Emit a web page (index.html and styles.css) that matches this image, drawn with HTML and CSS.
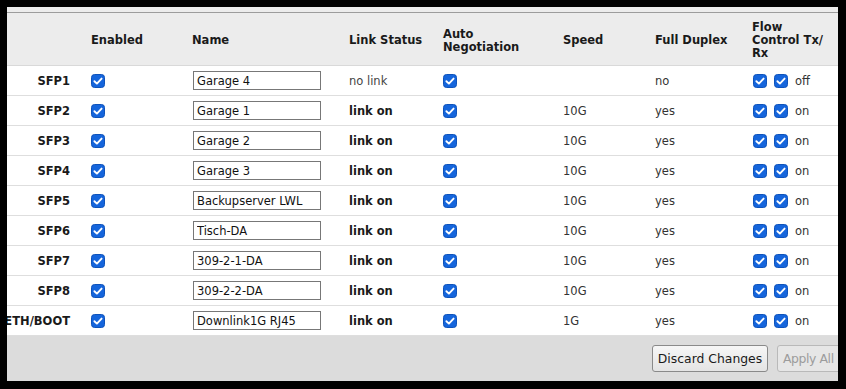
FILE: index.html
```html
<!DOCTYPE html>
<html lang="en">
<head>
<meta charset="utf-8">
<title>Ports</title>
<link rel="stylesheet" href="styles.css">
</head>
<body>
<svg class="defs" width="0" height="0" aria-hidden="true">
  <symbol id="chk" viewBox="0 0 14 14">
    <rect x="0.5" y="0.5" width="13" height="13" rx="3" fill="#1565dc" stroke="#0e53bb"/>
    <path d="M3.4 7.2 5.9 9.6 10.6 4.6" fill="none" stroke="#fff" stroke-width="1.9" stroke-linecap="round" stroke-linejoin="round"/>
  </symbol>
</svg>
<div class="frame">
  <div class="topbar"></div>
  <div class="scroller">
    <table class="ports">
      <colgroup>
        <col class="c-port"><col class="c-en"><col class="c-name"><col class="c-link"><col class="c-auto"><col class="c-speed"><col class="c-dup"><col class="c-flow">
      </colgroup>
      <thead>
        <tr>
          <th></th>
          <th>Enabled</th>
          <th>Name</th>
          <th>Link Status</th>
          <th>Auto<br>Negotiation</th>
          <th>Speed</th>
          <th>Full Duplex</th>
          <th>Flow<br>Control Tx/<br>Rx</th>
        </tr>
      </thead>
      <tbody>
        <tr>
          <td class="port">SFP1</td>
          <td><svg class="cb"><use href="#chk"/></svg></td>
          <td><input class="name" type="text" value="Garage 4"></td>
          <td class="muted">no link</td>
          <td><svg class="cb"><use href="#chk"/></svg></td>
          <td></td>
          <td>no</td>
          <td><span class="fc"><svg class="cb"><use href="#chk"/></svg><svg class="cb"><use href="#chk"/></svg><span>off</span></span></td>
        </tr>
        <tr>
          <td class="port">SFP2</td>
          <td><svg class="cb"><use href="#chk"/></svg></td>
          <td><input class="name" type="text" value="Garage 1"></td>
          <td class="on">link on</td>
          <td><svg class="cb"><use href="#chk"/></svg></td>
          <td>10G</td>
          <td>yes</td>
          <td><span class="fc"><svg class="cb"><use href="#chk"/></svg><svg class="cb"><use href="#chk"/></svg><span>on</span></span></td>
        </tr>
        <tr>
          <td class="port">SFP3</td>
          <td><svg class="cb"><use href="#chk"/></svg></td>
          <td><input class="name" type="text" value="Garage 2"></td>
          <td class="on">link on</td>
          <td><svg class="cb"><use href="#chk"/></svg></td>
          <td>10G</td>
          <td>yes</td>
          <td><span class="fc"><svg class="cb"><use href="#chk"/></svg><svg class="cb"><use href="#chk"/></svg><span>on</span></span></td>
        </tr>
        <tr>
          <td class="port">SFP4</td>
          <td><svg class="cb"><use href="#chk"/></svg></td>
          <td><input class="name" type="text" value="Garage 3"></td>
          <td class="on">link on</td>
          <td><svg class="cb"><use href="#chk"/></svg></td>
          <td>10G</td>
          <td>yes</td>
          <td><span class="fc"><svg class="cb"><use href="#chk"/></svg><svg class="cb"><use href="#chk"/></svg><span>on</span></span></td>
        </tr>
        <tr>
          <td class="port">SFP5</td>
          <td><svg class="cb"><use href="#chk"/></svg></td>
          <td><input class="name" type="text" value="Backupserver LWL"></td>
          <td class="on">link on</td>
          <td><svg class="cb"><use href="#chk"/></svg></td>
          <td>10G</td>
          <td>yes</td>
          <td><span class="fc"><svg class="cb"><use href="#chk"/></svg><svg class="cb"><use href="#chk"/></svg><span>on</span></span></td>
        </tr>
        <tr>
          <td class="port">SFP6</td>
          <td><svg class="cb"><use href="#chk"/></svg></td>
          <td><input class="name" type="text" value="Tisch-DA"></td>
          <td class="on">link on</td>
          <td><svg class="cb"><use href="#chk"/></svg></td>
          <td>10G</td>
          <td>yes</td>
          <td><span class="fc"><svg class="cb"><use href="#chk"/></svg><svg class="cb"><use href="#chk"/></svg><span>on</span></span></td>
        </tr>
        <tr>
          <td class="port">SFP7</td>
          <td><svg class="cb"><use href="#chk"/></svg></td>
          <td><input class="name" type="text" value="309-2-1-DA"></td>
          <td class="on">link on</td>
          <td><svg class="cb"><use href="#chk"/></svg></td>
          <td>10G</td>
          <td>yes</td>
          <td><span class="fc"><svg class="cb"><use href="#chk"/></svg><svg class="cb"><use href="#chk"/></svg><span>on</span></span></td>
        </tr>
        <tr>
          <td class="port">SFP8</td>
          <td><svg class="cb"><use href="#chk"/></svg></td>
          <td><input class="name" type="text" value="309-2-2-DA"></td>
          <td class="on">link on</td>
          <td><svg class="cb"><use href="#chk"/></svg></td>
          <td>10G</td>
          <td>yes</td>
          <td><span class="fc"><svg class="cb"><use href="#chk"/></svg><svg class="cb"><use href="#chk"/></svg><span>on</span></span></td>
        </tr>
        <tr>
          <td class="port">ETH/BOOT</td>
          <td><svg class="cb"><use href="#chk"/></svg></td>
          <td><input class="name" type="text" value="Downlink1G RJ45"></td>
          <td class="on">link on</td>
          <td><svg class="cb"><use href="#chk"/></svg></td>
          <td>1G</td>
          <td>yes</td>
          <td><span class="fc"><svg class="cb"><use href="#chk"/></svg><svg class="cb"><use href="#chk"/></svg><span>on</span></span></td>
        </tr>
      </tbody>
    </table>
    <div class="actions">
      <button class="btn btn-discard" type="button">Discard Changes</button>
      <button class="btn btn-apply" type="button" disabled>Apply All</button>
    </div>
  </div>
</div>
</body>
</html>
```

FILE: styles.css
```css
html, body {
  margin: 0;
  padding: 0;
}
body {
  background: #000;
  width: 846px;
  height: 389px;
  overflow: hidden;
  font-family: "DejaVu Sans", Verdana, sans-serif;
  font-size: 11.5px;
  color: #333;
}
.defs {
  position: absolute;
  width: 0;
  height: 0;
}
.frame {
  margin: 7px 0 0 7px;
  width: 831px;
  height: 374px;
  overflow: hidden;
  background: #dcdcdc;
}
.topbar {
  height: 5px;
  background: #ececec;
  border-bottom: 1px solid #9c9c9c;
}
.scroller {
  margin-left: -13px;
  width: 851px;
}
.ports {
  border-collapse: separate;
  border-spacing: 0;
  table-layout: fixed;
  width: 851px;
}
.c-port { width: 90px; }
.c-en { width: 101px; }
.c-name { width: 157px; }
.c-link { width: 94px; }
.c-auto { width: 120px; }
.c-speed { width: 92px; }
.c-dup { width: 97px; }
.c-flow { width: 100px; }

.ports th {
  box-sizing: border-box;
  height: 53px;
  padding: 3px 0 0 7px;
  background: #ececec;
  border-bottom: 1px solid #d9d9d9;
  text-align: left;
  vertical-align: middle;
  font-weight: bold;
  line-height: 13px;
  color: #1a1a1a;
  white-space: nowrap;
}
.ports td {
  box-sizing: border-box;
  height: 30px;
  padding: 0 0 0 7px;
  background: #fff;
  border-bottom: 1px solid #dedede;
  vertical-align: middle;
  white-space: nowrap;
  line-height: 14px;
}
.ports td.port {
  text-align: right;
  padding: 0 14px 0 0;
  font-weight: bold;
  color: #1a1a1a;
}
.ports td.on {
  font-weight: bold;
  color: #1a1a1a;
}
.ports td.muted {
  color: #444;
}
.cb {
  display: block;
  width: 14px;
  height: 14px;
  margin-top: 1px;
}
.fc {
  display: inline-flex;
  align-items: center;
  gap: 7px;
  margin-left: 1px;
  vertical-align: middle;
}
.fc span {
  line-height: 14px;
}
.name {
  box-sizing: border-box;
  display: block;
  width: 128px;
  height: 19px;
  margin: 0 0 0 1px;
  padding: 0 3px;
  border: 1px solid #777;
  border-radius: 0;
  background: #fff;
  font-family: "DejaVu Sans", Verdana, sans-serif;
  font-size: 11.5px;
  color: #111;
}
.actions {
  display: flex;
  justify-content: flex-end;
  gap: 9px;
  padding: 9px 2px 0 0;
}
.btn {
  box-sizing: border-box;
  height: 27px;
  padding: 0 2px;
  border-radius: 3px;
  font-family: "DejaVu Sans", Verdana, sans-serif;
  font-size: 12.4px;
  white-space: nowrap;
}
.btn-discard {
  width: 116px;
  border: 1px solid #8a8a8a;
  background: linear-gradient(#f6f6f6, #e4e4e4);
  color: #1a1a1a;
}
.btn-apply {
  width: 66px;
  padding: 0 0 0 5px;
  text-align: left;
  letter-spacing: -0.4px;
  border: 1px solid #b9b9b9;
  background: #e6e6e6;
  color: #9c9c9c;
}
```
